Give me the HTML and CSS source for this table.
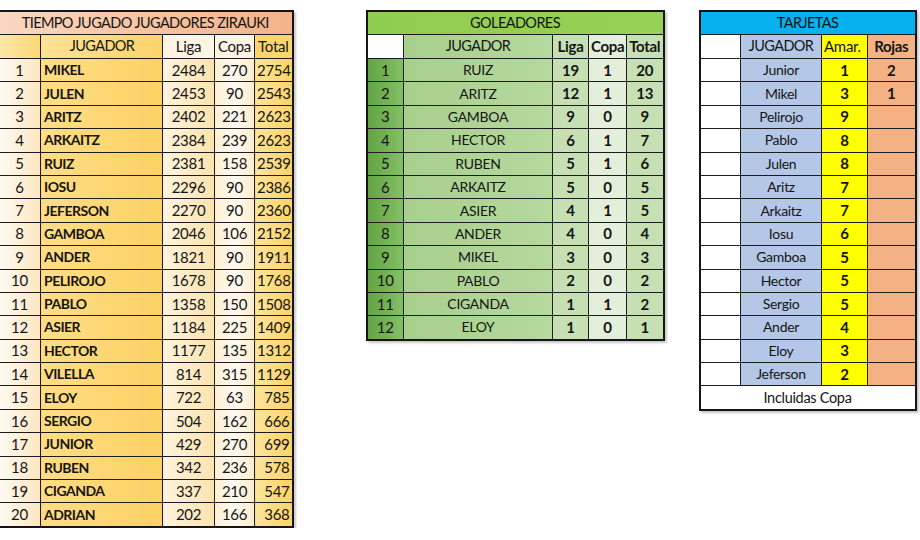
FILE: index.html
```html
<!DOCTYPE html>
<html>
<head>
<meta charset="utf-8">
<link rel="stylesheet" href="styles.css">
</head>
<body>
<div class="sheet">
  <table class="tbl tiempo">
    <colgroup><col style="width:42px"><col style="width:122px"><col style="width:52px"><col style="width:40px"><col style="width:38px"></colgroup>
    <tr class="title"><td colspan="5">TIEMPO JUGADO JUGADORES ZIRAUKI</td></tr>
    <tr class="head"><td class="ix"></td><td class="nm">JUGADOR</td><td class="lg">Liga</td><td class="cp">Copa</td><td class="tt">Total</td></tr>
    <tr><td class="ix">1</td><td class="nm">MIKEL</td><td class="lg">2484</td><td class="cp">270</td><td class="tt">2754</td></tr>
    <tr><td class="ix">2</td><td class="nm">JULEN</td><td class="lg">2453</td><td class="cp">90</td><td class="tt">2543</td></tr>
    <tr><td class="ix">3</td><td class="nm">ARITZ</td><td class="lg">2402</td><td class="cp">221</td><td class="tt">2623</td></tr>
    <tr><td class="ix">4</td><td class="nm">ARKAITZ</td><td class="lg">2384</td><td class="cp">239</td><td class="tt">2623</td></tr>
    <tr><td class="ix">5</td><td class="nm">RUIZ</td><td class="lg">2381</td><td class="cp">158</td><td class="tt">2539</td></tr>
    <tr><td class="ix">6</td><td class="nm">IOSU</td><td class="lg">2296</td><td class="cp">90</td><td class="tt">2386</td></tr>
    <tr><td class="ix">7</td><td class="nm">JEFERSON</td><td class="lg">2270</td><td class="cp">90</td><td class="tt">2360</td></tr>
    <tr><td class="ix">8</td><td class="nm">GAMBOA</td><td class="lg">2046</td><td class="cp">106</td><td class="tt">2152</td></tr>
    <tr><td class="ix">9</td><td class="nm">ANDER</td><td class="lg">1821</td><td class="cp">90</td><td class="tt">1911</td></tr>
    <tr><td class="ix">10</td><td class="nm">PELIROJO</td><td class="lg">1678</td><td class="cp">90</td><td class="tt">1768</td></tr>
    <tr><td class="ix">11</td><td class="nm">PABLO</td><td class="lg">1358</td><td class="cp">150</td><td class="tt">1508</td></tr>
    <tr><td class="ix">12</td><td class="nm">ASIER</td><td class="lg">1184</td><td class="cp">225</td><td class="tt">1409</td></tr>
    <tr><td class="ix">13</td><td class="nm">HECTOR</td><td class="lg">1177</td><td class="cp">135</td><td class="tt">1312</td></tr>
    <tr><td class="ix">14</td><td class="nm">VILELLA</td><td class="lg">814</td><td class="cp">315</td><td class="tt">1129</td></tr>
    <tr><td class="ix">15</td><td class="nm">ELOY</td><td class="lg">722</td><td class="cp">63</td><td class="tt">785</td></tr>
    <tr><td class="ix">16</td><td class="nm">SERGIO</td><td class="lg">504</td><td class="cp">162</td><td class="tt">666</td></tr>
    <tr><td class="ix">17</td><td class="nm">JUNIOR</td><td class="lg">429</td><td class="cp">270</td><td class="tt">699</td></tr>
    <tr><td class="ix">18</td><td class="nm">RUBEN</td><td class="lg">342</td><td class="cp">236</td><td class="tt">578</td></tr>
    <tr><td class="ix">19</td><td class="nm">CIGANDA</td><td class="lg">337</td><td class="cp">210</td><td class="tt">547</td></tr>
    <tr><td class="ix">20</td><td class="nm">ADRIAN</td><td class="lg">202</td><td class="cp">166</td><td class="tt">368</td></tr>
  </table>

  <table class="tbl goles">
    <colgroup><col style="width:37px"><col style="width:149px"><col style="width:36px"><col style="width:38px"><col style="width:37px"></colgroup>
    <tr class="title"><td colspan="5">GOLEADORES</td></tr>
    <tr class="head"><td class="ix"></td><td class="nm">JUGADOR</td><td class="lg">Liga</td><td class="cp">Copa</td><td class="tt">Total</td></tr>
    <tr><td class="ix">1</td><td class="nm">RUIZ</td><td class="lg">19</td><td class="cp">1</td><td class="tt">20</td></tr>
    <tr><td class="ix">2</td><td class="nm">ARITZ</td><td class="lg">12</td><td class="cp">1</td><td class="tt">13</td></tr>
    <tr><td class="ix">3</td><td class="nm">GAMBOA</td><td class="lg">9</td><td class="cp">0</td><td class="tt">9</td></tr>
    <tr><td class="ix">4</td><td class="nm">HECTOR</td><td class="lg">6</td><td class="cp">1</td><td class="tt">7</td></tr>
    <tr><td class="ix">5</td><td class="nm">RUBEN</td><td class="lg">5</td><td class="cp">1</td><td class="tt">6</td></tr>
    <tr><td class="ix">6</td><td class="nm">ARKAITZ</td><td class="lg">5</td><td class="cp">0</td><td class="tt">5</td></tr>
    <tr><td class="ix">7</td><td class="nm">ASIER</td><td class="lg">4</td><td class="cp">1</td><td class="tt">5</td></tr>
    <tr><td class="ix">8</td><td class="nm">ANDER</td><td class="lg">4</td><td class="cp">0</td><td class="tt">4</td></tr>
    <tr><td class="ix">9</td><td class="nm">MIKEL</td><td class="lg">3</td><td class="cp">0</td><td class="tt">3</td></tr>
    <tr><td class="ix">10</td><td class="nm">PABLO</td><td class="lg">2</td><td class="cp">0</td><td class="tt">2</td></tr>
    <tr><td class="ix">11</td><td class="nm">CIGANDA</td><td class="lg">1</td><td class="cp">1</td><td class="tt">2</td></tr>
    <tr><td class="ix">12</td><td class="nm">ELOY</td><td class="lg">1</td><td class="cp">0</td><td class="tt">1</td></tr>
  </table>

  <table class="tbl tarjetas">
    <colgroup><col style="width:41px"><col style="width:81px"><col style="width:46px"><col style="width:48px"></colgroup>
    <tr class="title"><td colspan="4">TARJETAS</td></tr>
    <tr class="head"><td class="ix"></td><td class="nm">JUGADOR</td><td class="am">Amar.</td><td class="rj">Rojas</td></tr>
    <tr><td class="ix"></td><td class="nm">Junior</td><td class="am">1</td><td class="rj">2</td></tr>
    <tr><td class="ix"></td><td class="nm">Mikel</td><td class="am">3</td><td class="rj">1</td></tr>
    <tr><td class="ix"></td><td class="nm">Pelirojo</td><td class="am">9</td><td class="rj"></td></tr>
    <tr><td class="ix"></td><td class="nm">Pablo</td><td class="am">8</td><td class="rj"></td></tr>
    <tr><td class="ix"></td><td class="nm">Julen</td><td class="am">8</td><td class="rj"></td></tr>
    <tr><td class="ix"></td><td class="nm">Aritz</td><td class="am">7</td><td class="rj"></td></tr>
    <tr><td class="ix"></td><td class="nm">Arkaitz</td><td class="am">7</td><td class="rj"></td></tr>
    <tr><td class="ix"></td><td class="nm">Iosu</td><td class="am">6</td><td class="rj"></td></tr>
    <tr><td class="ix"></td><td class="nm">Gamboa</td><td class="am">5</td><td class="rj"></td></tr>
    <tr><td class="ix"></td><td class="nm">Hector</td><td class="am">5</td><td class="rj"></td></tr>
    <tr><td class="ix"></td><td class="nm">Sergio</td><td class="am">5</td><td class="rj"></td></tr>
    <tr><td class="ix"></td><td class="nm">Ander</td><td class="am">4</td><td class="rj"></td></tr>
    <tr><td class="ix"></td><td class="nm">Eloy</td><td class="am">3</td><td class="rj"></td></tr>
    <tr><td class="ix"></td><td class="nm">Jeferson</td><td class="am">2</td><td class="rj"></td></tr>
    <tr class="foot"><td colspan="4">Incluidas Copa</td></tr>
  </table>
</div>
</body>
</html>
```

FILE: styles.css
```css
html, body {
  margin: 0;
  padding: 0;
  background: #ffffff;
}

body {
  font-family: Lato, "Open Sans", sans-serif;
  font-size: 14px;
  color: #151515;
}

.sheet {
  display: flex;
  align-items: flex-start;
  padding-top: 10px;
}

.tbl {
  border-collapse: collapse;
  table-layout: fixed;
  border: 2px solid #151515;
  box-shadow: 2px 2px 2px rgba(0, 0, 0, 0.22);
}

.tbl td {
  border: 1.5px solid #1c1c1c;
  height: 22.4px;
  padding: 0 2px;
  text-align: center;
  white-space: nowrap;
  overflow: hidden;
  line-height: 1;
  letter-spacing: -0.3px;
}

.tbl tr.title td {
  height: 22px;
  font-size: 14.5px;
  letter-spacing: -0.6px;
}

.tbl tr.head td {
  height: 23px;
  font-size: 15px;
}

.tbl tr.head td.nm {
  font-size: 14.5px;
  letter-spacing: -0.6px;
}

/* ---------- Tiempo jugado ---------- */
.tiempo {
  width: 294px;
  margin-left: -2px;
  border-left: none;
}

.tiempo .title td {
  background: linear-gradient(to right, #f9d7c0, #f6c09c 60%, #f3b28a);
  letter-spacing: -0.8px;
}

.tiempo .head .ix {
  background: linear-gradient(to right, #fde7a8, #fcd676);
}

.tiempo .head .nm {
  background: linear-gradient(to right, #fde195, #fbd36b);
}

.tiempo .head .lg,
.tiempo .head .cp {
  background: #fdf4e4;
}

.tiempo .head .tt {
  background: #fcd66c;
}

.tiempo .ix {
  background: linear-gradient(to right, #fffaf2, #fce6bf);
  font-size: 15px;
}

.tiempo .nm {
  background: linear-gradient(to right, #fedd85, #fbd164);
  text-align: left;
  font-weight: 700;
  padding-left: 3px;
  letter-spacing: -0.5px;
}

.tiempo .head .nm {
  text-align: center;
  font-weight: 400;
}

.tiempo .lg {
  background: linear-gradient(to right, #fdf3de, #fce3ae);
  font-size: 15px;
}

.tiempo .cp {
  background: linear-gradient(to right, #fdf0d6, #fef9f0 50%, #fdeccb);
  font-size: 15px;
}

.tiempo .tt {
  background: linear-gradient(to right, #fde49c, #fbd266);
  text-align: right;
  padding-right: 2px;
  font-size: 15px;
}

.tiempo .head .tt {
  text-align: center;
}

/* ---------- Goleadores ---------- */
.goles {
  width: 297px;
  margin-left: 72px;
}

.goles .title td {
  background: linear-gradient(to right, #8fcd50, #97d156);
}

.goles .head .ix {
  background: #ffffff;
}

.goles .ix {
  background: linear-gradient(to right, #62a444, #84bf64);
  font-size: 15px;
}

.goles .nm {
  background: linear-gradient(to right, #a7cf8c, #b6d99e);
}

.goles .lg,
.goles .tt {
  background: #c6e0b4;
  font-weight: 700;
  font-size: 15px;
}

.goles .cp {
  background: #e3efda;
  font-weight: 700;
  font-size: 15px;
}

/* ---------- Tarjetas ---------- */
.tarjetas {
  width: 216px;
  margin-left: 34px;
}

.tarjetas .title td {
  background: #07b1ef;
}

.tarjetas .ix {
  background: #ffffff;
}

.tarjetas .nm {
  background: #b4c7e7;
}

.tarjetas .am {
  background: #ffff00;
  font-weight: 700;
  font-size: 15px;
}

.tarjetas .head .am {
  font-weight: 400;
  text-align: left;
  padding-left: 2px;
}

.tarjetas .rj {
  background: #f4b183;
  font-weight: 700;
  font-size: 15px;
}

.tarjetas .foot td {
  background: #ffffff;
  height: 23px;
  font-size: 14.5px;
}
```
